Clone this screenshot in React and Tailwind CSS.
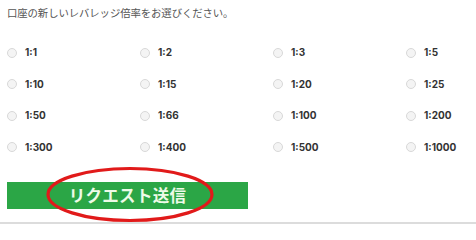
import React from "react";

const rows = [
  ["1:1", "1:2", "1:3", "1:5"],
  ["1:10", "1:15", "1:20", "1:25"],
  ["1:50", "1:66", "1:100", "1:200"],
  ["1:300", "1:400", "1:500", "1:1000"],
];

export default function App() {
  return (
    <div className="w-[476px] h-[224px] bg-white flex flex-col overflow-hidden" style={{ fontFamily: '"Noto Sans CJK JP", "Noto Sans", sans-serif' }}>
      <div className="flex-1 pl-[7px]">
        <div className="pt-[5px] h-[37px] text-[10.4px] leading-[16px] text-[#555] tracking-[-0.1px]">
          口座の新しいレバレッジ倍率をお選びください。
        </div>
        <div className="flex flex-col">
          {rows.map((r, i) => (
            <div key={i} className="grid grid-cols-[133px_133px_133px_133px] h-[31.5px] items-center">
              {r.map((v) => (
                <label key={v} className="flex items-center gap-[8px]">
                  <span className="w-[10px] h-[10px] rounded-full border border-[#d8d8d8] bg-[#f4f4f4]" />
                  <span className="text-[10px] font-bold text-[#333]" style={{ fontFamily: 'Inter, "Open Sans", sans-serif' }}>{v}</span>
                </label>
              ))}
            </div>
          ))}
        </div>
        <div className="relative mt-[19px] w-[241px] h-[27px] bg-[#2ba646] flex items-center justify-center">
          <span className="text-[16.5px] font-bold text-[#eefbe8] tracking-[0.3px] leading-none">リクエスト送信</span>
          <svg className="absolute left-[38px] top-[-16px]" width="170" height="57" viewBox="0 0 170 57">
            <ellipse cx="85" cy="28.5" rx="82" ry="26" fill="none" stroke="#e11a1a" strokeWidth="3.2" />
          </svg>
        </div>
      </div>
      <div className="h-[2px] bg-[#dcdcdc]" />
    </div>
  );
}
